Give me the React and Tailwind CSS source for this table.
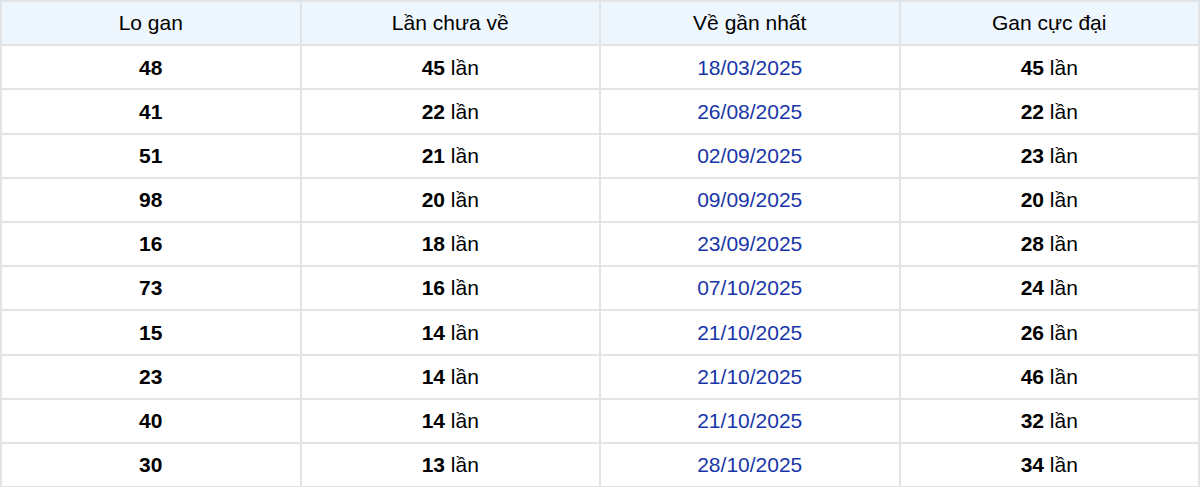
import React from "react";

const rows = [
  ["48", "45", "18/03/2025", "45"],
  ["41", "22", "26/08/2025", "22"],
  ["51", "21", "02/09/2025", "23"],
  ["98", "20", "09/09/2025", "20"],
  ["16", "18", "23/09/2025", "28"],
  ["73", "16", "07/10/2025", "24"],
  ["15", "14", "21/10/2025", "26"],
  ["23", "14", "21/10/2025", "46"],
  ["40", "14", "21/10/2025", "32"],
  ["30", "13", "28/10/2025", "34"],
];

const cell =
  "h-[44.2px] flex items-center justify-center border-r-2 border-b-2 border-[#e3e4e6]";

export default function App() {
  return (
    <div
      className="w-[1200px] bg-white text-[21px] text-black"
      style={{ fontFamily: '"Liberation Sans", Arial, sans-serif' }}
    >
      <div className="grid grid-cols-4 border-l-2 border-t-2 border-[#e3e4e6]">
        {["Lo gan", "Lần chưa về", "Về gần nhất", "Gan cực đại"].map((h) => (
          <div key={h} className={`${cell} bg-[#eef6fe]`}>
            {h}
          </div>
        ))}
        {rows.map((r, i) => (
          <React.Fragment key={i}>
            <div className={`${cell} font-bold`}>{r[0]}</div>
            <div className={cell}>
              <span className="font-bold">{r[1]}</span>&nbsp;lần
            </div>
            <div className={`${cell} text-[#1836a8]`}>{r[2]}</div>
            <div className={cell}>
              <span className="font-bold">{r[3]}</span>&nbsp;lần
            </div>
          </React.Fragment>
        ))}
      </div>
    </div>
  );
}
